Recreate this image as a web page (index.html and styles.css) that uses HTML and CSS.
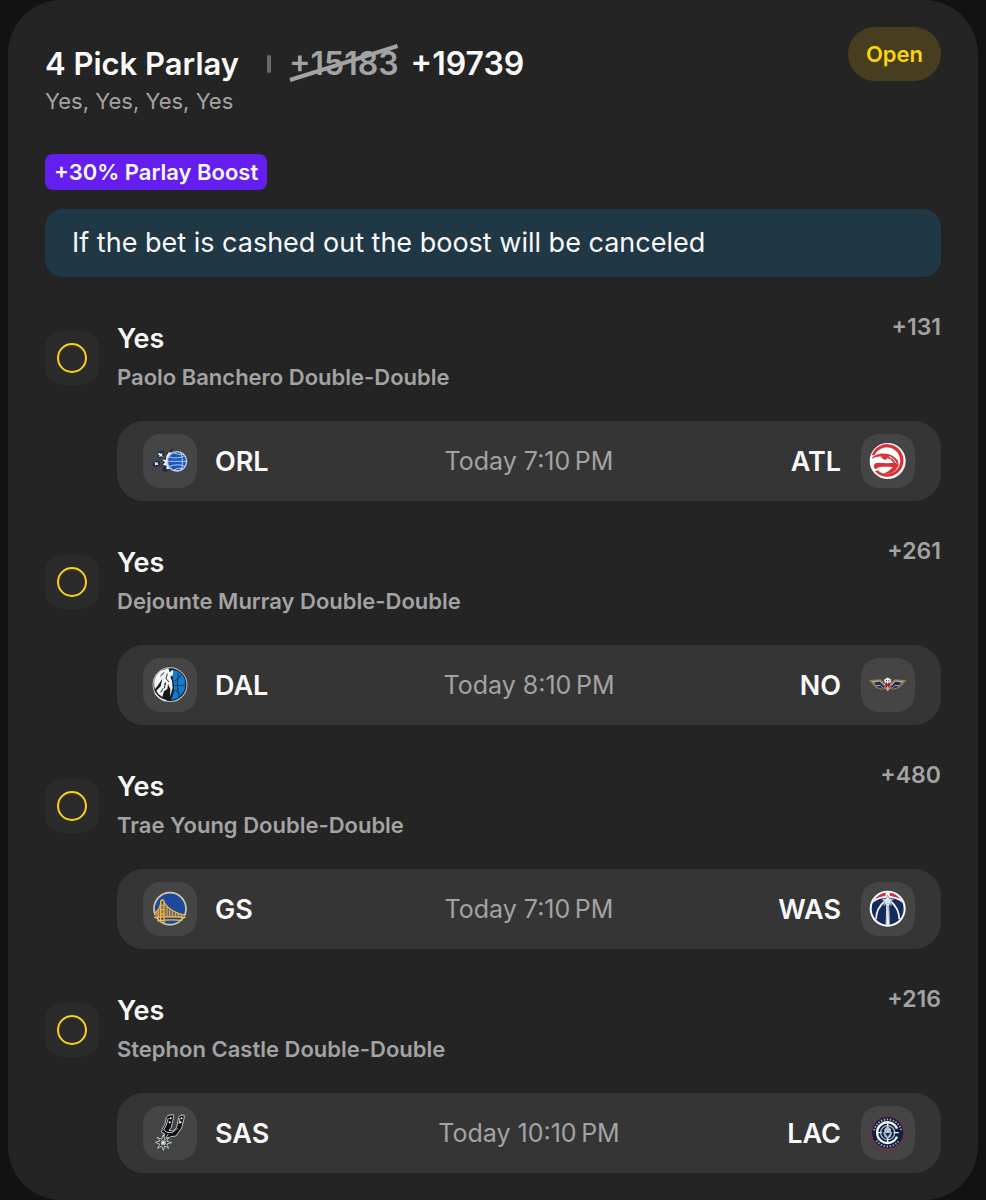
FILE: index.html
```html
<!DOCTYPE html>
<html lang="en">

<head>
    <meta charset="UTF-8">
    <meta name="viewport" content="width=device-width, initial-scale=1.0">
    <title>4 Pick Parlay</title>
    <link rel="stylesheet" href="styles.css">
</head>

<body>
<main class="bet-card">
    <header class="bet-header">
        <div class="bet-summary">
            <div class="bet-title-row">
                <h1 class="bet-title">4 Pick Parlay</h1>
                <span class="separator"></span>
                <div class="bet-odds">
                    <s class="odds-old">+15183
                        <svg class="strike" viewBox="0 0 110 40" preserveAspectRatio="none" aria-hidden="true">
                            <path d="M1 36 109 2" stroke="#a3a3a3" stroke-width="4"/>
                        </svg>
                    </s>
                    <span class="odds-new">+19739</span>
                </div>
            </div>
            <p class="bet-picks">Yes, Yes, Yes, Yes</p>
        </div>
        <span class="bet-status">Open</span>
    </header>

    <span class="boost">+30% Parlay Boost</span>
    <p class="notice">If the bet is cashed out the boost will be canceled</p>

    <ul class="legs">
        <!-- ORL - ATL -->
        <li class="leg">
            <span class="leg-status"><span class="ring"></span></span>
            <div class="leg-body">
                <div class="leg-top">
                    <h2 class="leg-pick">Yes</h2>
                    <span class="leg-odds">+131</span>
                </div>
                <p class="leg-market">Paolo Banchero Double-Double</p>
                <div class="match">
                    <div class="team">
                        <svg class="logo" viewBox="0 0 162 162" aria-hidden="true">
                            <path d="M92 43 82 48 78 54 72 55 68 60 78 62zM44 54 54 51 62 48 64 62 55 72 44 72zM30 84 40 80 50 80 52 94 40 100 28 95zM60 98 70 94 78 104 70 114 58 110zM62 78 72 68 76 92 62 92z" fill="#1d2b44"/>
                            <path d="M78 54 86 56 80 64 74 74 74 92 80 104 70 106 71 95 60 92 66 85 58 77 69 77 70 66z" fill="#edf2f8"/>
                            <path d="M48 56 53 59 58 57 57 63 60 68 54 67 49 70 49 64 45 61zM34 84 40 86 45 83 44 89 47 93 40 92 36 95 36 89z" fill="#e4ecf5"/>
                            <circle cx="102" cy="82" r="29" fill="#1b57b8" stroke="#c3d3ea" stroke-width="4"/>
                            <path d="M74 82H131M78 69Q104 77 126 64M79 97Q106 87 128 98M112 54Q124 80 114 110M92 57Q108 64 122 60M92 108Q106 100 122 104" fill="none" stroke="#b4c8e6" stroke-width="3"/>
                        </svg>
                        <span class="team-name">ORL</span>
                    </div>
                    <time class="match-time">Today 7:10&#8239;PM</time>
                    <div class="team away">
                        <span class="team-name">ATL</span>
                        <svg class="logo" viewBox="0 0 162 162" aria-hidden="true">
                            <circle cx="80" cy="81" r="54" fill="#fff"/>
                            <path d="M32 64A49 49 0 1 1 42 112L50 109A40 40 0 1 0 41 64z" fill="#d8333b"/>
                            <path d="M34 70Q50 55 76 59 98 62 111 80L113 94 104 109 88 119 66 120 82 112 96 100 84 98 62 98Q50 99 44 106 38 102 38 96 40 86 52 86L78 88 98 86 88 76 70 70Q50 64 34 74z" fill="#d8333b"/>
                            <path d="M84 67Q100 73 106 88" fill="none" stroke="#fff" stroke-width="3"/>
                            <path d="M60 68 80 68 76 77 66 76z" fill="#d8333b"/>
                        </svg>
                    </div>
                </div>
            </div>
        </li>
        <!-- DAL - NO -->
        <li class="leg">
            <span class="leg-status"><span class="ring"></span></span>
            <div class="leg-body">
                <div class="leg-top">
                    <h2 class="leg-pick">Yes</h2>
                    <span class="leg-odds">+261</span>
                </div>
                <p class="leg-market">Dejounte Murray Double-Double</p>
                <div class="match">
                    <div class="team">
                        <svg class="logo" viewBox="0 0 162 162" aria-hidden="true">
                            <circle cx="81" cy="80" r="54" fill="#15191e"/>
                            <circle cx="81" cy="80" r="51" fill="none" stroke="#aeb5ba" stroke-width="4"/>
                            <path d="M84 35Q126 38 127 80Q125 118 84 126Q98 98 91 70z" fill="#1779cf"/>
                            <path d="M94 70Q110 62 115 50M96 82Q116 85 127 79M94 96Q111 103 116 112M106 43Q99 80 108 119" fill="none" stroke="#14375c" stroke-width="3"/>
                            <path d="M40 52 53 38 67 34 76 30 80 42 90 36 90 51 82 56 87 69 89 89 81 116 82 93 75 78 73 93 63 100 58 117 46 108 40 98 53 85 58 62 46 80 36 94Q29 72 40 52z" fill="#f4f5f6"/>
                            <path d="M52 54 64 43M73 47 69 62 78 72M64 80 68 74 64 91M53 103 60 91" fill="none" stroke="#20262b" stroke-width="3"/>
                            <path d="M36 105Q47 123 70 128" fill="none" stroke="#e8eaec" stroke-width="4"/>
                        </svg>
                        <span class="team-name">DAL</span>
                    </div>
                    <time class="match-time">Today 8:10&#8239;PM</time>
                    <div class="team away">
                        <span class="team-name">NO</span>
                        <svg class="logo" viewBox="0 0 162 162" aria-hidden="true">
                            <path d="M24 67 58 64 69 71 73 61 80 58 87 61 91 71 102 64 136 67 124 80 113 91 96 95 88 92 80 101 72 92 64 95 47 91 36 80z" fill="#8f7d60"/>
                            <path d="M40 75 56 70 71 84 66 92 50 88zM120 75 104 70 89 84 94 92 110 88z" fill="#1b2950"/>
                            <path d="M34 71 56 69 69 83M126 71 104 69 91 83M46 83 58 82 66 90M114 83 102 82 94 90" fill="none" stroke="#c0ad8a" stroke-width="3"/>
                            <path d="M69 65 80 59 91 65 87 74 92 82 80 77 68 82 73 74z" fill="#f3f1ed"/>
                            <path d="M71 76 78 73 80 81 82 73 89 76 84 90H76z" fill="#a51e40"/>
                            <path d="M75 68H78M82 68H85" stroke="#26304a" stroke-width="3"/>
                            <path d="M75 91 80 84 85 91 80 99z" fill="#c8b189"/>
                        </svg>
                    </div>
                </div>
            </div>
        </li>
        <!-- GS - WAS -->
        <li class="leg">
            <span class="leg-status"><span class="ring"></span></span>
            <div class="leg-body">
                <div class="leg-top">
                    <h2 class="leg-pick">Yes</h2>
                    <span class="leg-odds">+480</span>
                </div>
                <p class="leg-market">Trae Young Double-Double</p>
                <div class="match">
                    <div class="team">
                        <svg class="logo" viewBox="0 0 162 162" aria-hidden="true">
                            <circle cx="81" cy="80" r="48" fill="#1b4a9c" stroke="#d3cba8" stroke-width="5"/>
                            <path d="M36 99 54 74 64 68 88 90 126 102 121 108H38z" fill="#6f6480"/>
                            <path d="M53 118V58L56 54H60L63 58V124M53 70H63M53 83H63M53 96H63" fill="none" stroke="#f7b935" stroke-width="4"/>
                            <path d="M34 94Q49 85 54 62M63 62Q83 92 127 100M33 107Q82 101 128 107M43 117Q84 111 118 115" fill="none" stroke="#f7b935" stroke-width="4"/>
                            <path d="M42 89V105M47 80V105M72 75V103M80 84V103M88 88V103M97 92V104M106 96V105M115 98V105" stroke="#eeb23d" stroke-width="3"/>
                        </svg>
                        <span class="team-name">GS</span>
                    </div>
                    <time class="match-time">Today 7:10&#8239;PM</time>
                    <div class="team away">
                        <span class="team-name">WAS</span>
                        <svg class="logo" viewBox="0 0 162 162" aria-hidden="true">
                            <circle cx="80" cy="80" r="54" fill="#fff"/>
                            <circle cx="80" cy="80" r="48" fill="#132c5b"/>
                            <path d="M35 63A48 48 0 0 1 125 63Q107 47 80 47T35 63z" fill="#fff"/>
                            <path d="M43 51Q57 32 75 32L73 42Q56 43 43 51zM117 51Q103 32 85 32L87 42Q104 43 117 51z" fill="#d52d42"/>
                            <path d="M72 57Q46 78 45 112M88 57Q114 78 115 112" fill="none" stroke="#f6f7fa" stroke-width="5"/>
                            <path d="M76 54H84L86 128H74z" fill="#fff"/>
                            <path d="M80 38 85 50 98 51 88 59 92 71 80 64 68 71 72 59 62 51 75 50z" fill="#e3e7ed" stroke="#7f8ba2" stroke-width="2"/>
                            <path d="M79 70 76 126M82 70 85 126" stroke="#8490a6" stroke-width="2"/>
                        </svg>
                    </div>
                </div>
            </div>
        </li>
        <!-- SAS - LAC -->
        <li class="leg">
            <span class="leg-status"><span class="ring"></span></span>
            <div class="leg-body">
                <div class="leg-top">
                    <h2 class="leg-pick">Yes</h2>
                    <span class="leg-odds">+216</span>
                </div>
                <p class="leg-market">Stephon Castle Double-Double</p>
                <div class="match">
                    <div class="team">
                        <svg class="logo" viewBox="0 0 162 162" aria-hidden="true">
                            <path d="M75 28 91 26 92 33 85 64 78 73 91 75 101 64 107 34 112 28 123 27 124 34 116 66 99 90 83 92 72 101 60 100 66 84 56 79 57 70 66 54 70 34z" fill="#0d0e0f" stroke="#bdc1c4" stroke-width="3"/>
                            <path d="M76 36 70 57 62 72 72 79 87 80 104 67M68 96 76 84M111 36 108 54" fill="none" stroke="#bfc4c8" stroke-width="3"/>
                            <circle cx="83" cy="37" r="3" fill="#fff"/>
                            <circle cx="80" cy="49" r="3" fill="#fff"/>
                            <circle cx="116" cy="37" r="3" fill="#fff"/>
                            <circle cx="113" cy="49" r="3" fill="#fff"/>
                            <path d="M61 86 65 101 76 93 71 106 86 110 71 114 77 127 65 120 61 133 56 120 44 127 50 114 37 109 51 105 42 94 56 100z" fill="#303436" stroke="#bcc0c3" stroke-width="3"/>
                            <circle cx="61" cy="110" r="8" fill="#a8afb3"/>
                            <circle cx="61" cy="110" r="3" fill="#fff"/>
                        </svg>
                        <span class="team-name">SAS</span>
                    </div>
                    <time class="match-time">Today 10:10&#8239;PM</time>
                    <div class="team away">
                        <span class="team-name">LAC</span>
                        <svg class="logo" viewBox="0 0 162 162" aria-hidden="true">
                            <circle cx="80" cy="80" r="49" fill="#101f3c" stroke="#9b2846" stroke-width="3"/>
                            <path d="M39 73A42 42 0 0 1 121 73" fill="none" stroke="#a5afbf" stroke-width="6" stroke-dasharray="4 5"/>
                            <path d="M46 104A42 42 0 0 0 114 104" fill="none" stroke="#a5afbf" stroke-width="6" stroke-dasharray="4 5"/>
                            <path d="M108 68A31 31 0 1 0 108 92" fill="none" stroke="#f1f4f8" stroke-width="7"/>
                            <circle cx="80" cy="80" r="21" fill="none" stroke="#a9b5c5" stroke-width="4"/>
                            <path d="M80 49V111M51 80H62M98 80H113" stroke="#eef2f6" stroke-width="4"/>
                            <path d="M80 60 90 70V79H94L89 92 80 98 71 92 66 79H70V70z" fill="#b3c0cf"/>
                            <path d="M72 81H88L80 93z" fill="#1a2b4d"/>
                        </svg>
                    </div>
                </div>
            </div>
        </li>
    </ul>
</main>
</body>

</html>
```

FILE: styles.css
```css
* {
    box-sizing: border-box;
}

body {
    margin: 0;
    background-color: #121212;
    color: #f8f8f8;
    font-family: Inter, "Liberation Sans", sans-serif;
}

h1,
h2,
p {
    margin: 0;
    font-weight: 600;
}

.bet-card {
    margin: 0 8px;
    padding: 27px 37px;
    border-radius: 54px;
    background-color: #242424;
}

.bet-header {
    display: flex;
    justify-content: space-between;
    align-items: flex-start;
    margin-bottom: 36px;
}

.bet-summary {
    padding-top: 17px;
}

.bet-title-row {
    display: flex;
    align-items: center;
    line-height: 40px;
}

.bet-title {
    font-size: 31px;
}

.separator {
    width: 4px;
    height: 18px;
    margin: 0 18px 0 28px;
    border-radius: 2px;
    background-color: #6b6b6b;
}

.bet-odds {
    display: flex;
    gap: 12px;
    font-size: 32px;
    font-weight: 600;
}

.odds-old {
    position: relative;
    color: #a3a3a3;
    text-decoration: none;
}

/* diagonal line over the old odds */
.strike {
    position: absolute;
    top: 0;
    left: 0;
    width: 100%;
    height: 40px;
}

.bet-picks {
    color: #a3a3a3;
    font-size: 22px;
    font-weight: 400;
    line-height: 34px;
}

.bet-status {
    padding: 0 18px;
    border-radius: 27px;
    background-color: #463e1e;
    color: #fbd30f;
    font-size: 22px;
    font-weight: 600;
    line-height: 54px;
}

.boost {
    display: block;
    width: fit-content;
    padding: 0 9px;
    border-radius: 8px;
    background-color: #641ef0;
    font-size: 22px;
    font-weight: 600;
    line-height: 36px;
}

.notice {
    margin-top: 19px;
    padding: 14px 27px;
    border-radius: 18px;
    background-color: #203746;
    font-size: 27px;
    font-weight: 400;
    line-height: 40px;
}

.legs {
    display: flex;
    flex-direction: column;
    gap: 40px;
    margin: 40px 0 0;
    padding: 0;
    list-style: none;
}

.leg {
    display: flex;
    gap: 18px;
}

.leg-status {
    display: flex;
    flex: none;
    justify-content: center;
    align-items: center;
    width: 54px;
    height: 54px;
    margin-top: 14px;
    border-radius: 18px;
    background-color: #2b2b2b;
}

.ring {
    width: 30px;
    height: 30px;
    border: 2px solid #fbd30f;
    border-radius: 50%;
}

.leg-body {
    flex: 1;
}

.leg-top {
    display: flex;
    justify-content: space-between;
    align-items: flex-start;
}

.leg-pick {
    font-size: 27px;
    line-height: 44px;
}

.leg-odds {
    color: #a3a3a3;
    font-size: 23px;
    font-weight: 600;
    line-height: 20px;
}

.leg-market {
    margin-bottom: 28px;
    color: #a3a3a3;
    font-size: 22px;
    line-height: 32px;
}

.match {
    display: grid;
    grid-template-columns: 1fr auto 1fr;
    align-items: center;
    padding: 13px 26px;
    border-radius: 27px;
    background-color: #353535;
}

.team {
    display: flex;
    align-items: center;
    gap: 18px;
}

.away {
    justify-content: flex-end;
    gap: 20px;
}

.team-name {
    font-size: 27px;
    font-weight: 600;
}

.match-time {
    color: #a3a3a3;
    font-size: 25px;
}

.logo {
    flex: none;
    width: 54px;
    height: 54px;
    border-radius: 18px;
    background-color: #454545;
}
```
